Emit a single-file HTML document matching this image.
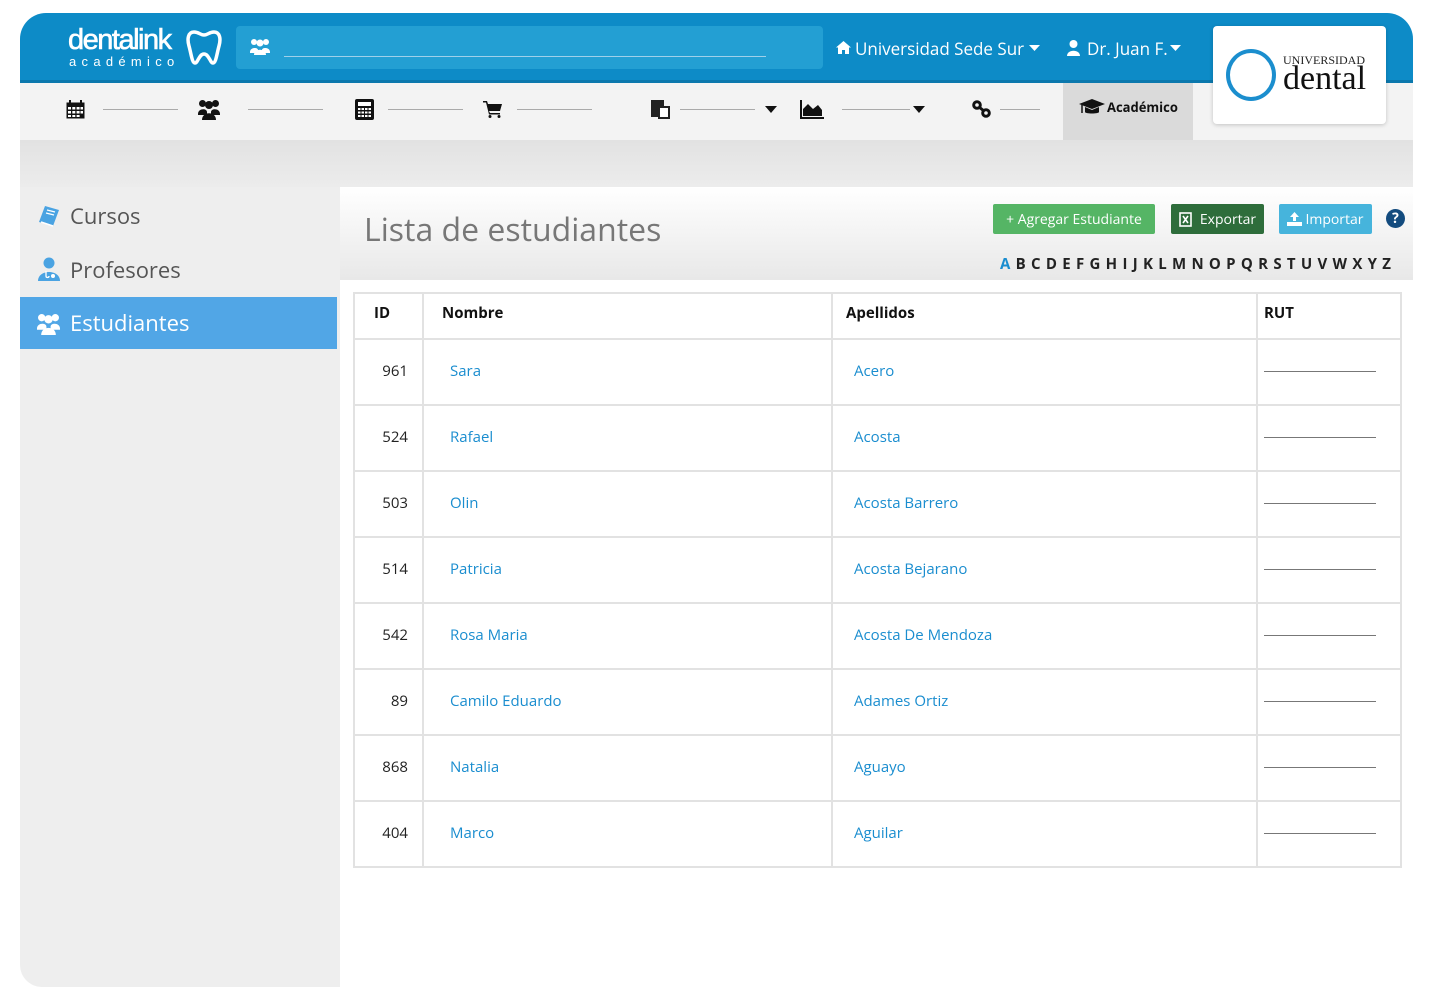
<!DOCTYPE html>
<html><head><meta charset="utf-8"><style>
*{box-sizing:border-box;margin:0;padding:0}
body{width:1434px;height:1000px;background:#fff;font-family:"Open Sans","DejaVu Sans","Liberation Sans",sans-serif;position:relative;overflow:hidden}
.abs{position:absolute}
.top{left:20px;top:13px;width:1393px;height:70px;background:#0d8bc7;border-radius:26px 26px 0 0;border-bottom:3px solid #0b78ad}
.nav{left:20px;top:83px;width:1393px;height:57px;background:#f3f3f3}
.band{left:20px;top:140px;width:1393px;height:47px;background:linear-gradient(#e2e2e2,#ececec)}
.side{left:20px;top:187px;width:320px;height:800px;background:#eeeeee;border-radius:0 0 0 22px}
.main{left:340px;top:187px;width:1073px;height:93px;background:linear-gradient(#fff,#e8e8e8)}
.line{height:1px;background:#aaa}
.wl{height:1px;background:#9fd0ea}
table{position:absolute;left:353px;top:292px;width:1049px;border-collapse:collapse;font-size:15px}
td,th{border:2px solid #e2e2e2;text-align:left}
th{height:46px;font-weight:bold;font-size:15px;color:#111;padding-bottom:6px}
td{height:66px;color:#1a8dcf;padding-bottom:2px}
td:first-child{color:#222;text-align:right;padding-right:14px}
.rut{display:block;width:112px;height:1px;background:#777;margin-left:6px}
.side .it{position:absolute;left:0;width:317px;height:52px;font-size:22px;color:#555;display:flex;align-items:center;padding-left:50px}
.btn{position:absolute;top:204px;height:30px;color:#fff;font-size:14px;display:flex;align-items:center;justify-content:center;border-radius:2px}
</style></head><body>
<div class="abs top"></div>
<div class="abs" style="left:68px;top:24px;color:#fff;font-size:29px;letter-spacing:-1.5px;font-family:'Liberation Sans',sans-serif;-webkit-text-stroke:0.6px #fff">dentalink</div>
<div class="abs" style="left:69px;top:54px;color:#fff;font-size:13px;letter-spacing:5.3px;font-family:'Liberation Sans',sans-serif">académico</div>
<svg class="abs" style="left:186px;top:29px" width="36" height="38" viewBox="0 0 36 38"><path d="M8 3C2 3 1 10 3 17C5 24 6 34 9 34C12 34 13 25 18 25C23 25 24 34 27 34C30 34 31 24 33 17C35 10 34 3 28 3C23 3 22 6 18 6C14 6 13 3 8 3Z" fill="none" stroke="#fff" stroke-width="3.5"/></svg>
<div class="abs" style="left:236px;top:26px;width:587px;height:43px;background:#239fd3;border-radius:4px"></div>
<svg class="abs" style="left:250px;top:38px" width="20" height="18" viewBox="0 0 20 18" fill="#fff"><circle cx="4" cy="4" r="3"/><circle cx="16" cy="4" r="3"/><circle cx="10" cy="5" r="3.5"/><path d="M0 14c0-5 8-5 8-2v3H0zM20 14c0-5-8-5-8-2v3h8z"/><path d="M4 17c0-7 12-7 12 0z"/></svg>
<div class="abs wl" style="left:284px;top:56px;width:482px"></div>
<svg class="abs" style="left:836px;top:41px" width="15" height="13" viewBox="0 0 15 13" fill="#fff"><path d="M7.5 0L0 6.5h2V13h4V9h3v4h4V6.5h2z"/></svg>
<div class="abs" style="left:855px;top:37px;color:#fff;font-size:17px">Universidad Sede Sur</div>
<svg class="abs" style="left:1029px;top:45px" width="11" height="7"><path d="M0 0h11L5.5 6z" fill="#fff"/></svg>
<svg class="abs" style="left:1067px;top:40px" width="13" height="16" viewBox="0 0 13 16" fill="#fff"><circle cx="6.5" cy="4" r="4"/><path d="M0 16c0-7 13-7 13 0z"/></svg>
<div class="abs" style="left:1087px;top:37px;color:#fff;font-size:17px">Dr. Juan F.</div>
<svg class="abs" style="left:1170px;top:45px" width="11" height="7"><path d="M0 0h11L5.5 6z" fill="#fff"/></svg>
<div class="abs nav"></div>
<div class="abs" style="left:1063px;top:83px;width:130px;height:57px;background:#dadada"></div>
<svg class="abs" style="left:1079px;top:99px" width="26" height="17" viewBox="0 0 26 17"><path d="M13 0L0 5l13 5 13-5z" fill="#111"/><path d="M6 8v5c0 2 14 2 14 0V8l-7 3z" fill="#111"/><path d="M3 6v8" stroke="#111" stroke-width="1.5"/></svg>
<div class="abs" style="left:1107px;top:98px;font-size:13px;font-weight:bold;color:#111">Académico</div>
<div class="abs" style="left:1213px;top:26px;width:173px;height:98px;background:#fff;border-radius:4px;box-shadow:0 1px 4px rgba(0,0,0,.2)"></div>
<div class="abs" style="left:1226px;top:49px;width:50px;height:52px;border:4px solid #1b8ece;border-radius:50%"></div>
<div class="abs" style="left:1283px;top:53px;font-family:'Liberation Serif',serif;font-size:12px;color:#222">UNIVERSIDAD</div>
<div class="abs" style="left:1283px;top:60px;font-family:'Liberation Serif',serif;font-size:34px;color:#111">dental</div>
<svg class="abs" style="left:66px;top:100px" width="19" height="19" viewBox="0 0 19 19"><rect x="0.5" y="2.5" width="18" height="16" fill="#111"/><rect x="3" y="0" width="2" height="4" fill="#111"/><rect x="14" y="0" width="2" height="4" fill="#111"/><g fill="#fff"><rect x="2" y="7" width="3" height="2.5"/><rect x="6.3" y="7" width="3" height="2.5"/><rect x="10.6" y="7" width="3" height="2.5"/><rect x="14.5" y="7" width="2.5" height="2.5"/><rect x="2" y="11" width="3" height="2.5"/><rect x="6.3" y="11" width="3" height="2.5"/><rect x="10.6" y="11" width="3" height="2.5"/><rect x="14.5" y="11" width="2.5" height="2.5"/><rect x="2" y="15" width="3" height="2"/><rect x="6.3" y="15" width="3" height="2"/><rect x="10.6" y="15" width="3" height="2"/></g></svg>
<div class="abs line" style="left:103px;top:109px;width:75px"></div>
<svg class="abs" style="left:198px;top:99px" width="22" height="21" viewBox="0 0 22 21" fill="#111"><circle cx="4.5" cy="4.5" r="3.5"/><circle cx="17.5" cy="4.5" r="3.5"/><circle cx="11" cy="6" r="4"/><path d="M0 15c0-6 9-6 9-2v3H0zM22 15c0-6-9-6-9-2v3h9z"/><path d="M4 21c0-9 14-9 14 0z"/></svg>
<div class="abs line" style="left:248px;top:109px;width:75px"></div>
<svg class="abs" style="left:355px;top:99px" width="19" height="21" viewBox="0 0 19 21"><rect width="19" height="21" rx="2" fill="#111"/><rect x="3" y="3" width="13" height="4" fill="#fff"/><g fill="#fff"><rect x="3" y="9" width="2.5" height="2"/><rect x="6.5" y="9" width="2.5" height="2"/><rect x="10" y="9" width="2.5" height="2"/><rect x="13.5" y="9" width="2.5" height="2"/><rect x="3" y="12.5" width="2.5" height="2"/><rect x="6.5" y="12.5" width="2.5" height="2"/><rect x="10" y="12.5" width="2.5" height="2"/><rect x="13.5" y="12.5" width="2.5" height="2"/><rect x="3" y="16" width="2.5" height="2"/><rect x="6.5" y="16" width="2.5" height="2"/><rect x="10" y="16" width="2.5" height="2"/><rect x="13.5" y="16" width="2.5" height="2"/></g></svg>
<div class="abs line" style="left:388px;top:109px;width:75px"></div>
<svg class="abs" style="left:483px;top:101px" width="19" height="17" viewBox="0 0 19 17" fill="#111"><path d="M0 0h4l1 3h14l-2 7H6l1 2h10v1.5H6L3 1.5H0z"/><circle cx="7" cy="15.5" r="1.5"/><circle cx="16" cy="15.5" r="1.5"/></svg>
<div class="abs line" style="left:517px;top:109px;width:75px"></div>
<div class="abs" style="left:651px;top:100px;width:13px;height:17px;background:#222"></div><div class="abs" style="left:658px;top:106px;width:12px;height:13px;background:#fff;border:2px solid #222"></div>
<div class="abs line" style="left:680px;top:109px;width:75px"></div>
<svg class="abs" style="left:765px;top:106px" width="12" height="7"><path d="M0 0h12L6 7z" fill="#111"/></svg>
<svg class="abs" style="left:800px;top:100px" width="24" height="19"><path d="M1 0V18H24" stroke="#111" stroke-width="2" fill="none"/><path d="M3 16L3 9L8 4L13 9L18 5L22 10V16Z" fill="#111"/></svg>
<div class="abs line" style="left:842px;top:109px;width:68px"></div>
<svg class="abs" style="left:913px;top:106px" width="12" height="7"><path d="M0 0h12L6 7z" fill="#111"/></svg>
<svg class="abs" style="left:972px;top:100px" width="19" height="18" viewBox="0 0 19 18" fill="none" stroke="#111" stroke-width="3"><circle cx="5" cy="5" r="3.3"/><circle cx="14" cy="13" r="3.3"/><path d="M7 7l5 4"/></svg>
<div class="abs line" style="left:1000px;top:109px;width:40px"></div>
<div class="abs band"></div>
<div class="abs side">
<div class="it" style="top:3px"><svg class="abs" style="left:18px;top:15px" width="22" height="22" viewBox="0 0 22 22"><path d="M7 1l14 4-6 16L1 17z" fill="#4aa3e2"/><path d="M3 17l12 4" stroke="#fff" stroke-width="1.5"/><path d="M9 5l8 2M8 8l8 2" stroke="#fff" stroke-width="1.2"/></svg>Cursos</div>
<div class="it" style="top:57px"><svg class="abs" style="left:18px;top:13px" width="22" height="24" viewBox="0 0 22 24" fill="#4aa3e2"><circle cx="11" cy="6" r="5.5"/><path d="M0 24c0-12 22-12 22 0z"/><circle cx="15" cy="19" r="2" fill="#fff"/><path d="M8 14v5c0 2 3 2 3 0" stroke="#fff" stroke-width="1.3" fill="none"/></svg>Profesores</div>
<div class="it" style="top:110px;background:#51a6e6;color:#fff;font-size:22px"><svg class="abs" style="left:16px;top:16px" width="25" height="22" viewBox="0 0 22 21" fill="#fff"><circle cx="4.5" cy="4.5" r="3.5"/><circle cx="17.5" cy="4.5" r="3.5"/><circle cx="11" cy="6" r="4"/><path d="M0 15c0-6 9-6 9-2v3H0zM22 15c0-6-9-6-9-2v3h9z"/><path d="M4 21c0-9 14-9 14 0z"/></svg>Estudiantes</div>
</div>
<div class="abs main"></div>
<div class="abs" style="left:364px;top:208px;font-size:32px;color:#777">Lista de estudiantes</div>
<div class="btn" style="left:993px;width:162px;background:#55b565">+ Agregar Estudiante</div>
<div class="btn" style="left:1171px;width:93px;background:#2e6d3b"><svg width="13" height="15" viewBox="0 0 13 15" style="margin-right:8px"><rect x="1" y="1" width="11" height="13" fill="none" stroke="#fff" stroke-width="1.6"/><path d="M4 4l5 7M9 4l-5 7" stroke="#fff" stroke-width="1.6"/></svg>Exportar</div>
<div class="btn" style="left:1279px;width:93px;background:#46b4dc"><svg width="15" height="14" viewBox="0 0 15 14" style="margin-right:3px" fill="#fff"><path d="M7.5 0L3 5h3v4h3V5h3z"/><rect x="0" y="10" width="15" height="4"/></svg>Importar</div>
<div class="abs" style="left:1386px;top:209px;width:19px;height:19px;border-radius:50%;background:#134b7e;color:#fff;font-size:14px;font-weight:bold;text-align:center;line-height:19px">?</div>
<div class="abs" style="left:1000px;top:254px;font-size:15px;font-weight:bold;color:#222;letter-spacing:1.2px;word-spacing:-1px"><span style="color:#1a8dcf">A</span> B C D E F G H I J K L M N O P Q R S T U V W X Y Z</div>
<table>
<tr><th style="width:69px;padding-left:19px">ID</th><th style="width:409px;padding-left:18px">Nombre</th><th style="width:425px;padding-left:13px">Apellidos</th><th style="padding-left:6px">RUT</th></tr>
<tr><td>961</td><td style="padding-left:26px">Sara</td><td style="padding-left:21px">Acero</td><td><span class="rut"></span></td></tr>
<tr><td>524</td><td style="padding-left:26px">Rafael</td><td style="padding-left:21px">Acosta</td><td><span class="rut"></span></td></tr>
<tr><td>503</td><td style="padding-left:26px">Olin</td><td style="padding-left:21px">Acosta Barrero</td><td><span class="rut"></span></td></tr>
<tr><td>514</td><td style="padding-left:26px">Patricia</td><td style="padding-left:21px">Acosta Bejarano</td><td><span class="rut"></span></td></tr>
<tr><td>542</td><td style="padding-left:26px">Rosa Maria</td><td style="padding-left:21px">Acosta De Mendoza</td><td><span class="rut"></span></td></tr>
<tr><td>89</td><td style="padding-left:26px">Camilo Eduardo</td><td style="padding-left:21px">Adames Ortiz</td><td><span class="rut"></span></td></tr>
<tr><td>868</td><td style="padding-left:26px">Natalia</td><td style="padding-left:21px">Aguayo</td><td><span class="rut"></span></td></tr>
<tr><td>404</td><td style="padding-left:26px">Marco</td><td style="padding-left:21px">Aguilar</td><td><span class="rut"></span></td></tr>
</table>
</body></html>
